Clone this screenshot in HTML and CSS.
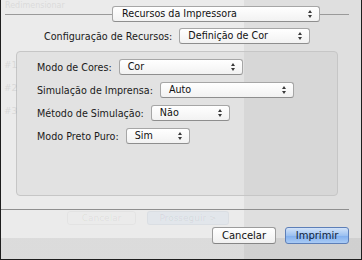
FILE: index.html
```html
<!DOCTYPE html>
<html lang="pt">
<head>
    <meta charset="UTF-8">
    <title>Recursos da Impressora</title>
    <link rel="stylesheet" href="styles.css">
</head>
<body>

<div class="window">
    <!-- janela por baixo, quase invisível -->
    <div class="ghost-title">Redimensionar</div>
    <div class="ghost-num n1">#1</div>
    <div class="ghost-num n2">#2</div>
    <div class="ghost-num n3">#3</div>

    <div class="header">
        <div class="rule rule-left"></div>
        <div class="popup popup-top">Recursos da Impressora<span class="arrows"></span></div>
        <div class="rule rule-right"></div>
    </div>

    <div class="config-row">
        <span class="label">Configuração de Recursos:</span>
        <div class="popup popup-config">Definição de Cor<span class="arrows"></span></div>
    </div>

    <div class="group-box">
        <div class="row">
            <span class="label">Modo de Cores:</span>
            <div class="popup w-cor">Cor<span class="arrows"></span></div>
        </div>
        <div class="row">
            <span class="label">Simulação de Imprensa:</span>
            <div class="popup w-auto">Auto<span class="arrows"></span></div>
        </div>
        <div class="row">
            <span class="label">Método de Simulação:</span>
            <div class="popup w-nao">Não<span class="arrows"></span></div>
        </div>
        <div class="row">
            <span class="label">Modo Preto Puro:</span>
            <div class="popup w-sim">Sim<span class="arrows"></span></div>
        </div>
    </div>

    <div class="separator"></div>

    <div class="ghost-buttons">
        <span class="ghost-btn">Cancelar</span>
        <span class="ghost-btn ghost-blue">Prosseguir &gt;</span>
    </div>

    <div class="buttons">
        <button class="btn">Cancelar</button>
        <button class="btn btn-default">Imprimir</button>
    </div>
</div>

</body>
</html>
```

FILE: styles.css
```css
body {
    margin: 0;
    padding: 0;
    font-family: "DejaVu Sans", "Liberation Sans", sans-serif;
    font-size: 9.6px;
    color: #1a1a1a;
}

.window {
    position: relative;
    width: 362px;
    height: 260px;
    box-sizing: border-box;
    border: 1px solid #1e1e1e;
    border-top: none;
    display: flex;
    flex-direction: column;
    overflow: hidden;
    background:
        linear-gradient(to bottom, transparent 238px, rgba(0, 0, 0, 0.065) 238px),
        linear-gradient(to right, #ebebeb 243px, #dfdfdf 243px);
}

/* restos da janela de baixo */
.ghost-title {
    position: absolute;
    left: 4px;
    top: 1px;
    font-size: 8px;
    color: #000;
    opacity: 0.07;
}

.ghost-num {
    position: absolute;
    left: 3px;
    font-size: 9px;
    color: #000;
    opacity: 0.08;
}

.n1 { top: 60px; }
.n2 { top: 83px; }
.n3 { top: 106px; }

.header {
    display: flex;
    align-items: center;
    margin-top: 6px;
    padding-left: 4px;
}

.rule {
    height: 1px;
    background-color: #9a9a9a;
}

.rule-left {
    flex: 1;
}

.rule-right {
    width: 29px;
    margin-right: 12px;
}

.popup {
    position: relative;
    box-sizing: border-box;
    height: 16px;
    line-height: 14px;
    padding-left: 8px;
    background: linear-gradient(#ffffff, #f2f2f2);
    border: 1px solid #a6a6a6;
    border-bottom-color: #8e8e8e;
    border-radius: 3px;
    color: #111;
    white-space: nowrap;
}

.arrows {
    position: absolute;
    right: 6px;
    top: 3px;
    width: 5px;
    height: 8px;
}

.arrows::before,
.arrows::after {
    content: "";
    position: absolute;
    left: 0;
    border-left: 2.5px solid transparent;
    border-right: 2.5px solid transparent;
}

.arrows::before {
    top: 0;
    border-bottom: 3px solid #3a3a3a;
}

.arrows::after {
    bottom: 0;
    border-top: 3px solid #3a3a3a;
}

.popup-top {
    width: 208px;
    padding-left: 9px;
}

.config-row {
    display: flex;
    align-items: center;
    margin-top: 6px;
    padding-left: 43px;
    gap: 7px;
}

.popup-config {
    width: 131px;
}

.group-box {
    margin: 7px 0 0 15px;
    width: 322px;
    height: 145px;
    box-sizing: border-box;
    padding: 7px 0 0 20px;
    background-color: rgba(0, 0, 0, 0.035);
    border: 1px solid #c6c6c6;
    border-radius: 4px;
    display: flex;
    flex-direction: column;
    gap: 7px;
}

.row {
    display: flex;
    align-items: center;
    gap: 7px;
}

.w-cor { width: 124px; }
.w-auto { width: 134px; }
.w-nao { width: 79px; }
.w-sim { width: 64px; }

.separator {
    height: 1px;
    margin: 13px 12px 0 0;
    background-color: #8f8f8f;
}

.ghost-buttons {
    display: flex;
    gap: 11px;
    margin: 1px 0 0 66px;
    height: 14px;
}

.ghost-btn {
    width: 69px;
    box-sizing: border-box;
    line-height: 12px;
    text-align: center;
    font-size: 9px;
    border: 1px solid rgba(0, 0, 0, 0.03);
    border-radius: 3px;
    color: rgba(0, 0, 0, 0.07);
}

.ghost-blue {
    width: 82px;
    background-color: rgba(90, 150, 230, 0.06);
}

.buttons {
    display: flex;
    justify-content: flex-end;
    gap: 9px;
    margin: 2px 12px 0 0;
}

.btn {
    box-sizing: border-box;
    width: 64px;
    height: 17px;
    padding: 0;
    font-family: inherit;
    font-size: 10px;
    line-height: 15px;
    color: #111;
    background: linear-gradient(#ffffff, #f0f0f0);
    border: 1px solid #9c9c9c;
    border-bottom-color: #858585;
    border-radius: 3px;
}

.btn-default {
    color: #0f1d3a;
    background: linear-gradient(#d3e3f8, #9cc1f1 50%, #80aeee 51%, #a9cbf5);
    border-color: #5d7fb8;
}
```
